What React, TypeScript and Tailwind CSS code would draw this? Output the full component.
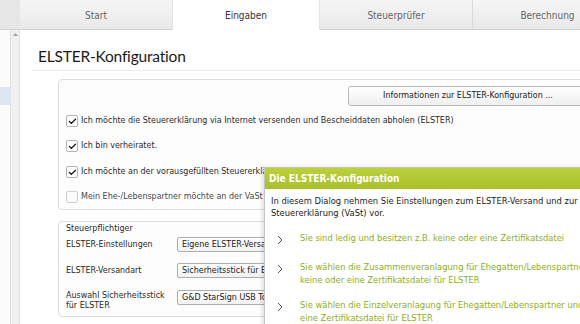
import { Check } from "lucide-react";

const tabs = [
  { label: "Start", width: "w-[152px]", active: false },
  { label: "Eingaben", width: "w-[148px]", active: true },
  { label: "Steuerprüfer", width: "w-[152px]", active: false },
  { label: "Berechnung", width: "w-[150px]", active: false },
];

const checkRows = [
  {
    text: "Ich möchte die Steuererklärung via Internet versenden und Bescheiddaten abholen (ELSTER)",
    checked: true,
    gap: "mt-[7px]",
  },
  { text: "Ich bin verheiratet.", checked: true, gap: "mt-[9px]" },
  {
    text: "Ich möchte an der vorausgefüllten Steuererklärung (VaSt) teilnehmen",
    checked: true,
    gap: "mt-[10px]",
  },
  {
    text: "Mein Ehe-/Lebenspartner möchte an der VaSt teilnehmen",
    checked: false,
    gap: "mt-[9px]",
  },
];

const dialogItems = [
  {
    lines: ["Sie sind ledig und besitzen z.B. keine oder eine Zertifikatsdatei"],
    gap: "mt-[13px]",
  },
  {
    lines: [
      "Sie wählen die Zusammenveranlagung für Ehegatten/Lebenspartner und besitzen z.B.",
      "keine oder eine Zertifikatsdatei für ELSTER",
    ],
    gap: "mt-[16px]",
  },
  {
    lines: [
      "Sie wählen die Einzelveranlagung für Ehegatten/Lebenspartner und besitzen",
      "eine Zertifikatsdatei für ELSTER",
    ],
    gap: "mt-[13px]",
  },
];

function Checkbox({ checked }: { checked: boolean }) {
  return (
    <div
      className={`w-[12px] h-[12px] shrink-0 rounded-[2px] border flex items-center justify-center ${
        checked ? "border-[#b3b3b3] bg-white" : "border-[#d0d0d0] bg-[#fbfbfb]"
      }`}
    >
      {checked && <Check size={9} strokeWidth={3.5} color="#111" />}
    </div>
  );
}

function SelectBox({ value }: { value: string }) {
  return (
    <div className="w-[220px] h-[15px] shrink-0 rounded-[2px] border border-[#adadad] bg-gradient-to-b from-white to-[#f1f1f1] pl-[4px] flex items-center whitespace-nowrap overflow-hidden text-[#222]">
      {value}
    </div>
  );
}

export default function App() {
  return (
    <div className="w-[580px] h-[324px] overflow-hidden relative bg-white flex flex-col font-['DejaVu_Sans_Condensed','Liberation_Sans',sans-serif] text-[8.9px] text-[#333]">
      {/* tab bar */}
      <div className="h-[30px] shrink-0 flex bg-[#e6e6e6]">
        <div className="w-[20px] shrink-0 border-b border-[#d2d2d2]" />
        {tabs.map((tab, index) => (
          <div
            key={tab.label}
            className={`${tab.width} shrink-0 flex items-center justify-center pt-px text-[10px] ${
              tab.active
                ? "bg-white text-[#333] border-x border-[#e2e2e2]"
                : "bg-gradient-to-b from-[#f5f5f5] to-[#e9e9e9] text-[#666] border-b border-[#cfcfcf]"
            } ${index === 3 ? "border-l border-l-[#dadada]" : ""}`}
          >
            {tab.label}
          </div>
        ))}
      </div>

      <div className="flex flex-1 min-h-0">
        {/* left tree */}
        <div className="w-[10px] shrink-0 bg-[#fbfbfb] pt-[57px]">
          <div className="h-[18px] bg-[#dde7f4]" />
        </div>
        {/* scrollbar */}
        <div className="w-[10px] shrink-0 bg-[#f0f0f0] border-x border-[#e0e0e0] flex justify-center pt-[3px]">
          <svg width="5" height="3" viewBox="0 0 5 3">
            <polygon points="2.5,0 5,3 0,3" fill="#a0a0a0" />
          </svg>
        </div>

        {/* main */}
        <div className="flex-1 min-w-0 overflow-hidden bg-white">
          <h1 className="pl-[18px] pt-[16px] h-[40px] font-['Lato',sans-serif] text-[15.5px] leading-[20px] text-[#1a1a1a] tracking-[-0.2px]">
            ELSTER-Konfiguration
          </h1>
          <div className="ml-[12px] h-px bg-[#ececec]" />

          <div className="ml-[38px] mt-[8px] w-[580px] h-[131px] rounded-[4px] border border-[#dcdcdc] bg-[#fdfdfd] pl-[7px] pt-[6px]">
            <div className="ml-[282px] w-[240px] h-[20px] rounded-[3px] border border-[#b9b9b9] bg-gradient-to-b from-white to-[#efefef] flex items-center justify-center text-[#222]">
              Informationen zur ELSTER-Konfiguration ...
            </div>
            {checkRows.map((row) => (
              <div key={row.text} className={`${row.gap} h-[16px] flex items-center gap-[3px]`}>
                <Checkbox checked={row.checked} />
                <span className={`whitespace-nowrap ${row.checked ? "text-[#2a2a2a]" : "text-[#4a4a4a]"}`}>
                  {row.text}
                </span>
              </div>
            ))}
          </div>

          <div className="ml-[38px] mt-[11px] w-[580px] h-[96px] rounded-[4px] border border-[#dcdcdc] bg-[#fdfdfd] pl-[7px]">
            <div className="h-[12px] leading-[12px] text-[#2a2a2a]">Steuerpflichtiger</div>
            <div className="mt-[3px] flex items-center text-[#2a2a2a]">
              <div className="w-[111px] shrink-0">ELSTER-Einstellungen</div>
              <SelectBox value="Eigene ELSTER-Versandeinstellungen" />
            </div>
            <div className="mt-[11px] flex items-center text-[#2a2a2a]">
              <div className="w-[111px] shrink-0">ELSTER-Versandart</div>
              <SelectBox value="Sicherheitsstick für ELSTER" />
            </div>
            <div className="mt-[12px] flex items-start text-[#2a2a2a]">
              <div className="w-[111px] shrink-0 leading-[10px]">
                Auswahl Sicherheitsstick
                <br />
                für ELSTER
              </div>
              <SelectBox value="G&D StarSign USB Token" />
            </div>
          </div>
        </div>
      </div>

      {/* dialog overlay */}
      <div className="absolute left-[264px] top-[167px] w-[340px] h-[180px] bg-white border border-[#c4c4c4] shadow-[-2px_0_4px_rgba(0,0,0,0.12)] text-[9.3px]">
        <div className="h-[21px] bg-gradient-to-b from-[#bdd03e] to-[#a8bf2b] pl-[4px] flex items-center text-white font-bold text-[10px]">
          Die ELSTER-Konfiguration
        </div>
        <div className="pl-[6px] pt-[6px]">
          <p className="leading-[12px] text-[#222] whitespace-nowrap">
            In diesem Dialog nehmen Sie Einstellungen zum ELSTER-Versand und zur Teilnahme an der vorausgefüllten
            <br />
            Steuererklärung (VaSt) vor.
          </p>
          {dialogItems.map((item) => (
            <div key={item.lines[0]} className={`${item.gap} flex items-start`}>
              <svg width="6" height="10" viewBox="0 0 6 10" className="ml-[6px] mt-[3px] shrink-0">
                <polyline points="1,1 5,5 1,9" fill="none" stroke="#555" strokeWidth="1" />
              </svg>
              <div className="ml-[17px] leading-[12.5px] text-[#8ead22] whitespace-nowrap">
                {item.lines.map((line) => (
                  <div key={line}>{line}</div>
                ))}
              </div>
            </div>
          ))}
        </div>
      </div>
    </div>
  );
}
